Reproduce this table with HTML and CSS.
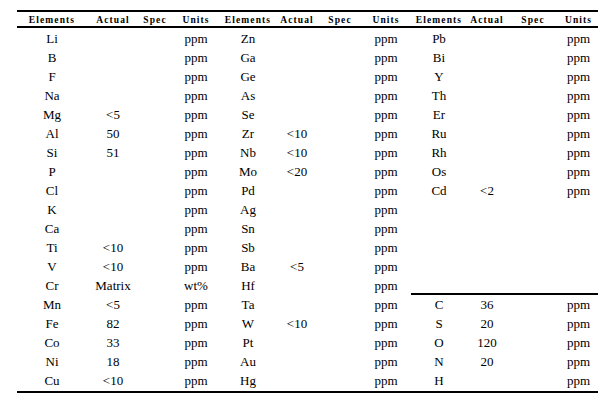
FILE: index.html
```html
<!DOCTYPE html>
<html>
<head>
<meta charset="utf-8">
<link rel="stylesheet" href="styles.css">
</head>
<body>
<table class="spec-table">
  <colgroup>
    <col class="c-el1"><col class="c-ac1"><col class="c-sp1"><col class="c-un1">
    <col class="c-el2"><col class="c-ac2"><col class="c-sp2"><col class="c-un2">
    <col class="c-el3"><col class="c-ac3"><col class="c-sp3"><col class="c-un3">
  </colgroup>
  <thead>
    <tr>
      <th>Elements</th><th>Actual</th><th>Spec</th><th>Units</th>
      <th>Elements</th><th>Actual</th><th>Spec</th><th>Units</th>
      <th>Elements</th><th>Actual</th><th>Spec</th><th>Units</th>
    </tr>
  </thead>
  <tbody>
    <tr class="first"><td>Li</td><td></td><td></td><td>ppm</td><td>Zn</td><td></td><td></td><td>ppm</td><td>Pb</td><td></td><td></td><td>ppm</td></tr>
    <tr><td>B</td><td></td><td></td><td>ppm</td><td>Ga</td><td></td><td></td><td>ppm</td><td>Bi</td><td></td><td></td><td>ppm</td></tr>
    <tr><td>F</td><td></td><td></td><td>ppm</td><td>Ge</td><td></td><td></td><td>ppm</td><td>Y</td><td></td><td></td><td>ppm</td></tr>
    <tr><td>Na</td><td></td><td></td><td>ppm</td><td>As</td><td></td><td></td><td>ppm</td><td>Th</td><td></td><td></td><td>ppm</td></tr>
    <tr><td>Mg</td><td>&lt;5</td><td></td><td>ppm</td><td>Se</td><td></td><td></td><td>ppm</td><td>Er</td><td></td><td></td><td>ppm</td></tr>
    <tr><td>Al</td><td>50</td><td></td><td>ppm</td><td>Zr</td><td>&lt;10</td><td></td><td>ppm</td><td>Ru</td><td></td><td></td><td>ppm</td></tr>
    <tr><td>Si</td><td>51</td><td></td><td>ppm</td><td>Nb</td><td>&lt;10</td><td></td><td>ppm</td><td>Rh</td><td></td><td></td><td>ppm</td></tr>
    <tr><td>P</td><td></td><td></td><td>ppm</td><td>Mo</td><td>&lt;20</td><td></td><td>ppm</td><td>Os</td><td></td><td></td><td>ppm</td></tr>
    <tr><td>Cl</td><td></td><td></td><td>ppm</td><td>Pd</td><td></td><td></td><td>ppm</td><td>Cd</td><td>&lt;2</td><td></td><td>ppm</td></tr>
    <tr><td>K</td><td></td><td></td><td>ppm</td><td>Ag</td><td></td><td></td><td>ppm</td><td></td><td></td><td></td><td></td></tr>
    <tr><td>Ca</td><td></td><td></td><td>ppm</td><td>Sn</td><td></td><td></td><td>ppm</td><td></td><td></td><td></td><td></td></tr>
    <tr><td>Ti</td><td>&lt;10</td><td></td><td>ppm</td><td>Sb</td><td></td><td></td><td>ppm</td><td></td><td></td><td></td><td></td></tr>
    <tr><td>V</td><td>&lt;10</td><td></td><td>ppm</td><td>Ba</td><td>&lt;5</td><td></td><td>ppm</td><td></td><td></td><td></td><td></td></tr>
    <tr><td>Cr</td><td>Matrix</td><td></td><td>wt%</td><td>Hf</td><td></td><td></td><td>ppm</td><td class="sep"></td><td class="sep"></td><td class="sep"></td><td class="sep"></td></tr>
    <tr><td>Mn</td><td>&lt;5</td><td></td><td>ppm</td><td>Ta</td><td></td><td></td><td>ppm</td><td>C</td><td>36</td><td></td><td>ppm</td></tr>
    <tr><td>Fe</td><td>82</td><td></td><td>ppm</td><td>W</td><td>&lt;10</td><td></td><td>ppm</td><td>S</td><td>20</td><td></td><td>ppm</td></tr>
    <tr><td>Co</td><td>33</td><td></td><td>ppm</td><td>Pt</td><td></td><td></td><td>ppm</td><td>O</td><td>120</td><td></td><td>ppm</td></tr>
    <tr><td>Ni</td><td>18</td><td></td><td>ppm</td><td>Au</td><td></td><td></td><td>ppm</td><td>N</td><td>20</td><td></td><td>ppm</td></tr>
    <tr class="last"><td>Cu</td><td>&lt;10</td><td></td><td>ppm</td><td>Hg</td><td></td><td></td><td>ppm</td><td>H</td><td></td><td></td><td>ppm</td></tr>
  </tbody>
</table>
</body>
</html>
```

FILE: styles.css
```css
html, body {
  margin: 0;
  padding: 0;
  background: #fff;
}

body {
  padding: 10px 0 0 17px;
  font-family: "Liberation Serif", "Times New Roman", serif;
  color: #000;
}

.spec-table {
  table-layout: fixed;
  width: 581px;
  border-collapse: separate;
  border-spacing: 0;
  border-top: 2px solid #000;
  border-bottom: 2px solid #000;
}

.c-el1 { width: 70px; }
.c-ac1 { width: 52px; }
.c-sp1 { width: 32px; }
.c-un1 { width: 50px; }
.c-el2 { width: 54px; }
.c-ac2 { width: 44px; }
.c-sp2 { width: 42px; }
.c-un2 { width: 50px; }
.c-el3 { width: 56px; }
.c-ac3 { width: 40px; }
.c-sp3 { width: 52px; }
.c-un3 { width: 39px; }

.spec-table th {
  height: 14px;
  padding: 0;
  font-size: 9.5px;
  font-weight: bold;
  letter-spacing: 1.1px;
  line-height: 12px;
  vertical-align: bottom;
  text-align: center;
  white-space: nowrap;
  border-bottom: 2px solid #000;
}

.spec-table td {
  height: 19px;
  padding: 0;
  font-size: 13px;
  line-height: 19px;
  text-align: center;
  vertical-align: middle;
  white-space: nowrap;
}

.spec-table tr.first td {
  padding-top: 1px;
}

.spec-table tr.last td {
  padding-bottom: 1px;
}

.spec-table td.sep {
  box-shadow: inset 0 -2px 0 #000;
}
```
